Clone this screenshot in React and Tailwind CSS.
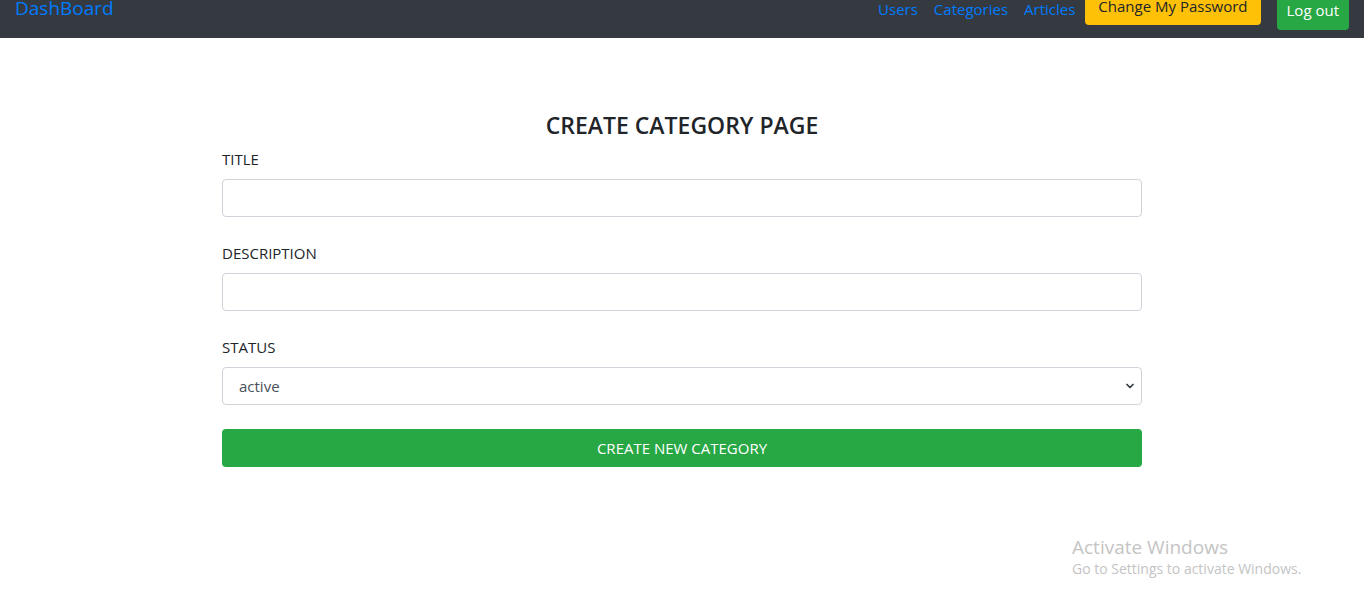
import { ChevronDown } from 'lucide-react'

const font = { fontFamily: '"Open Sans", "Noto Sans", sans-serif' }

function Field({ label, children }) {
  return (
    <div className="mb-6">
      <label className="block mb-2 text-[15px] leading-6 text-[#212529]">{label}</label>
      {children}
    </div>
  )
}

export default function App() {
  return (
    <div className="relative min-h-[598px] bg-white" style={font}>
      <nav className="h-[38px] overflow-hidden bg-[#343a40]">
        <div className="flex items-start -mt-[13px] px-[15px]">
          <a className="mt-[6px] text-[19px] leading-[30px] text-[#007bff]">DashBoard</a>
          <div className="ml-auto flex items-start">
            <div className="mt-[10px] flex text-[15px] leading-6 text-[#007bff]">
              <a className="px-2">Users</a>
              <a className="px-2">Categories</a>
              <a className="px-2">Articles</a>
            </div>
            <button className="ml-[2px] h-[38px] px-[13px] rounded bg-[#ffc107] text-[15px] text-[#212529] leading-6">Change My Password</button>
            <button className="ml-4 mt-[5px] h-[38px] pb-[3px] px-[10px] rounded bg-[#28a745] text-[15px] text-white leading-6">Log out</button>
          </div>
        </div>
      </nav>

      <div className="w-[920px] mx-auto pt-[73px]">
        <h4 className="text-center text-[23px] font-semibold leading-[29px] text-[#212529] mb-[7px]">CREATE CATEGORY PAGE</h4>
        <Field label="TITLE">
          <input className="block w-full h-[38px] border border-[#ced4da] rounded px-3" />
        </Field>
        <Field label="DESCRIPTION">
          <input className="block w-full h-[38px] border border-[#ced4da] rounded px-3" />
        </Field>
        <Field label="STATUS">
          <div className="relative">
            <select className="block w-full h-[38px] appearance-none border border-[#ced4da] rounded pl-4 pr-8 text-[15px] text-[#495057] bg-white">
              <option>active</option>
              <option>inactive</option>
            </select>
            <ChevronDown size={12} strokeWidth={3.5} className="absolute right-[6px] top-[13px] text-[#343a40] pointer-events-none" />
          </div>
        </Field>
        <button className="block w-full h-[38px] rounded bg-[#28a745] text-white text-[15px] leading-6">CREATE NEW CATEGORY</button>
      </div>

      <div className="absolute left-[1072px] top-[534px] text-[#c4c4c4]">
        <div className="text-[19px] leading-[26px]">Activate Windows</div>
        <div className="text-[14px] leading-[18px]">Go to Settings to activate Windows.</div>
      </div>
    </div>
  )
}
